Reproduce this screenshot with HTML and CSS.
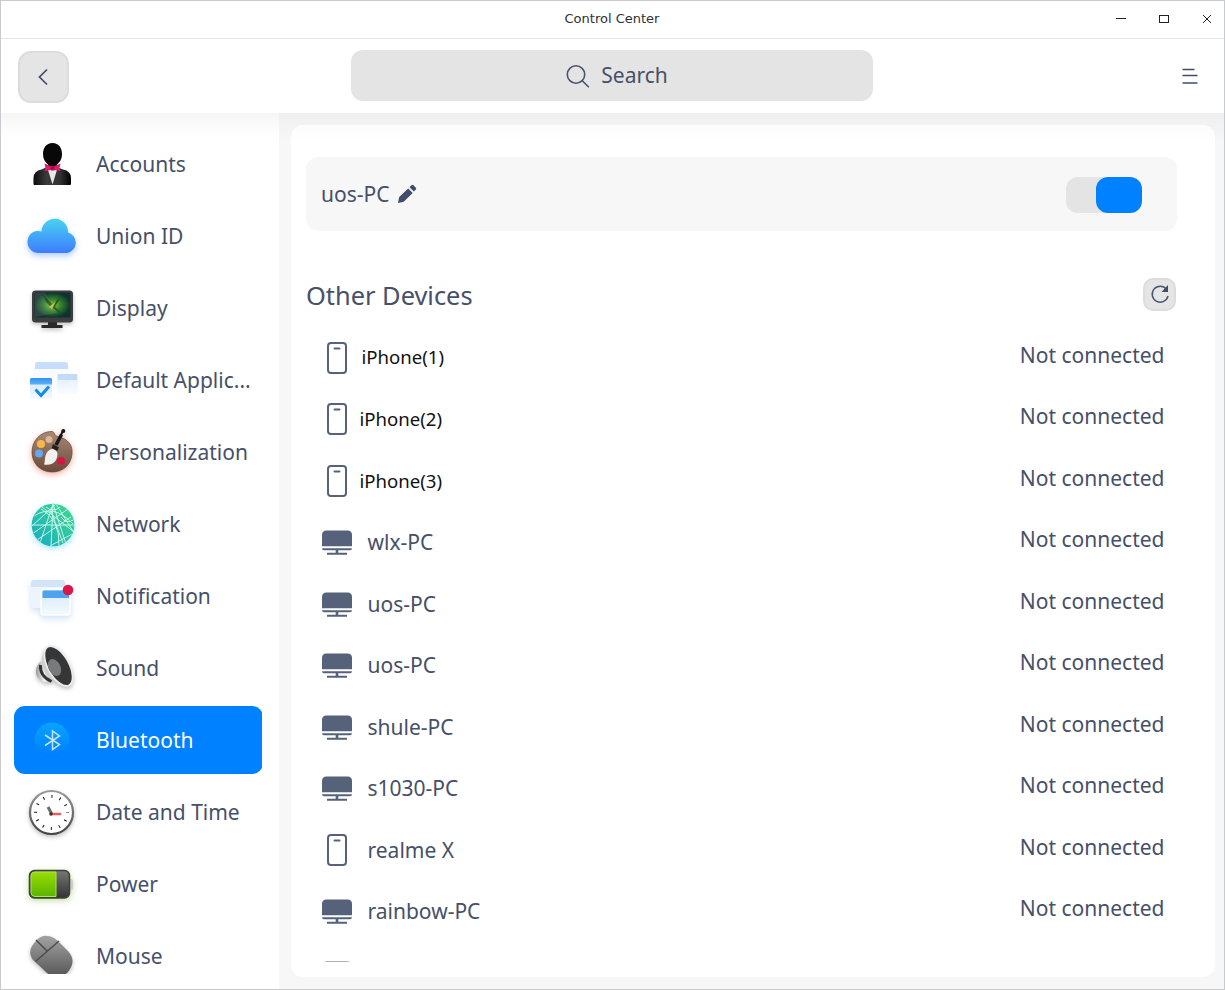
FILE: index.html
```html
<!DOCTYPE html>
<html lang="en">
<head>
<meta charset="utf-8">
<title>Control Center</title>
<link rel="stylesheet" href="styles.css">
</head>
<body>
<svg class="defs" width="0" height="0" aria-hidden="true">
  <defs>
    <linearGradient id="gCloud" x1="0" y1="0" x2="0" y2="1"><stop offset="0" stop-color="#48d2f0"/><stop offset="1" stop-color="#3e7cff"/></linearGradient>
    <linearGradient id="gSuit" x1="0" y1="0" x2="1" y2="0"><stop offset="0" stop-color="#0c0c0c"/><stop offset=".35" stop-color="#3a3a3a"/><stop offset=".7" stop-color="#333"/><stop offset="1" stop-color="#000"/></linearGradient>
    <radialGradient id="gScreen"><stop offset="0" stop-color="#8ccb1c"/><stop offset=".5" stop-color="#2f7d30"/><stop offset="1" stop-color="#10322e"/></radialGradient>
    <linearGradient id="gPane" x1="0" y1="0" x2="0" y2="1"><stop offset="0" stop-color="#d5e7f9"/><stop offset="1" stop-color="#f5faff"/></linearGradient>
    <linearGradient id="gBlue" x1="0" y1="0" x2="0" y2="1"><stop offset="0" stop-color="#2f93f0"/><stop offset="1" stop-color="#5db2f5"/></linearGradient>
    <linearGradient id="gWood" x1="0" y1="0" x2="0" y2="1"><stop offset="0" stop-color="#a98a74"/><stop offset="1" stop-color="#6b4a3c"/></linearGradient>
    <linearGradient id="gNet" x1="1" y1="0" x2="0" y2="1"><stop offset="0" stop-color="#42dc8b"/><stop offset="1" stop-color="#16aac2"/></linearGradient>
    <linearGradient id="gMetal" x1="0" y1="0" x2="1" y2="0"><stop offset="0" stop-color="#999"/><stop offset=".5" stop-color="#f1f1f1"/><stop offset="1" stop-color="#999"/></linearGradient>
    <linearGradient id="gBt" x1="0" y1="0" x2="0" y2="1"><stop offset="0" stop-color="#08a4ff"/><stop offset="1" stop-color="#007cfe"/></linearGradient>
    <linearGradient id="gRim" x1="0" y1="0" x2="0" y2="1"><stop offset="0" stop-color="#999"/><stop offset="1" stop-color="#444"/></linearGradient>
    <linearGradient id="gGreen" x1="0" y1="0" x2="0" y2="1"><stop offset="0" stop-color="#9bdc00"/><stop offset="1" stop-color="#5ab500"/></linearGradient>
    <linearGradient id="gDark" x1="0" y1="0" x2="0" y2="1"><stop offset="0" stop-color="#777"/><stop offset="1" stop-color="#333"/></linearGradient>
    <linearGradient id="gMouse" x1="0" y1="0" x2="0" y2="1"><stop offset="0" stop-color="#a3a3a3"/><stop offset="1" stop-color="#555"/></linearGradient>
    <clipPath id="cNet"><circle cx="27" cy="26" r="21"/></clipPath>
  </defs>
  <symbol id="phone" viewBox="0 0 32 36">
    <rect x="7" y="3" width="18" height="30" rx="3" fill="none" stroke="#556279" stroke-width="2"/>
    <path d="M13.500 8.400h5" stroke="#556279" stroke-width="2" stroke-linecap="round"/>
  </symbol>
  <symbol id="pc" viewBox="0 0 32 36">
    <path d="M1 22.300V11q0-4.500 4.500-4.500h21q4.500 0 4.500 4.500v11.300z" fill="#556279"/>
    <path d="M1 24.300h30q0 2-2 2H17.300v2.500H26v2H6v-2h8.700v-2.500H3q-2 0-2-2z" fill="#556279"/>
  </symbol>
</svg>
<div class="window">
  <header class="titlebar">
    <h1 class="title">Control Center</h1>
    <svg class="window-buttons" viewBox="0 0 100 16" width="100" height="16" fill="none" stroke="#222">
      <path d="M0 7.500h10"/><rect x="43.500" y="4.500" width="9" height="7"/><path d="M87 4l8 8m0-8l-8 8"/>
    </svg>
  </header>
  <div class="toolbar">
    <button class="back"><svg width="20" height="20" viewBox="0 0 20 20" fill="none" stroke="#414d68" stroke-width="1.700"><path d="M13 2.500L5.500 10l7.500 7.500"/></svg></button>
    <div class="search">
      <svg width="26" height="26" viewBox="0 0 26 26" fill="none" stroke="#46536b" stroke-width="1.600"><circle cx="11" cy="11.500" r="8.700"/><path d="M17.300 17.800l6.500 6.500"/></svg>
      <span>Search</span>
    </div>
    <svg class="menu" width="16" height="18" viewBox="0 0 16 18" fill="none" stroke="#414d68" stroke-width="1.400"><path d="M.5 2.500h12M.5 8.500h15M.5 16h15"/></svg>
  </div>
  <div class="body">
    <nav class="sidebar">
      <div class="nav-clip">
      <a class="nav-item"><svg class="nav-icon" viewBox="0 0 54 54"><path d="M8.500 46V40q0-7 8-8.500L22 29h10l6 2.500q8 1.500 8 8.500v6q0 1-1 1H9.500q-1 0-1-1z" fill="url(#gSuit)"/><path d="M23 32l4.500 14.500L32 32z" fill="#e8e8e8"/><path d="M27.500 5C21 5 18 10 18 16c0 5 2 8 5 10.500V29h9v-2.500c3-2.500 5-5.500 5-10.500 0-6-3-11-9.500-11z" fill="#080808"/><path d="M19.500 25.500l7 3h2l7-3-1 4.500 1 3-6.500-1h-3l-6.500 1 1-3z" fill="#e0196c"/><rect x="25.500" y="28" width="4" height="4.500" rx="1" fill="#a90e4b"/></svg><span>Accounts</span></a>
      <a class="nav-item"><svg class="nav-icon glow-blue" viewBox="0 0 54 54"><path d="M13.500 43A11 11 0 0 1 2.500 32A10.500 10.500 0 0 1 16.500 21.500A13 13 0 0 1 43 22.500A10.500 10.500 0 0 1 42 43z" fill="url(#gCloud)"/></svg><span>Union ID</span></a>
      <a class="nav-item"><svg class="nav-icon shade" viewBox="0 0 54 54"><path d="M23 38h9v5h5.500v3h-21v-3H23z" fill="#292929"/><rect x="7" y="8.500" width="41" height="32" rx="3.500" fill="#3b3d40"/><rect x="9.500" y="10.500" width="36" height="25" rx="1.500" fill="url(#gScreen)"/><path d="M10 11h10l12 20-22 4z" fill="#fff" opacity=".1"/><path d="M18 12l9 10 8-6-5 9 6 6-10-6-5-5z" fill="#182e1a" opacity=".6"/><path d="M24 25l7-6-4 8z" fill="#b5c56a"/></svg><span>Display</span></a>
      <a class="nav-item"><svg class="nav-icon" viewBox="0 0 54 54"><path d="M8 14h37v20H8z" fill="#f8fbff"/><path d="M10 14v-3q0-3 3-3h27q3 0 3 3v4H10z" fill="#c6defa"/><path d="M32 20h21v19q0 1-1 1H33q-1 0-1-1z" fill="url(#gPane)" opacity=".65"/><path d="M33 20h18q1 0 1 1v5H33z" fill="#c2dcf8"/><path d="M5 28h22v17H5z" fill="url(#gPane)"/><path d="M5 30.500v-5q0-1.500 1.500-1.500h19q1.500 0 1.500 1.500v5z" fill="url(#gBlue)"/><path d="M10.500 35.500l5.500 6 8-9" fill="none" stroke="#138be9" stroke-width="3"/></svg><span>Default Applic...</span></a>
      <a class="nav-item"><svg class="nav-icon glow-red" viewBox="0 0 54 54"><path d="M26 5.500c4-1 3 5 7 5C43 13 48 19 47 28 46 39 38 46 27 46 15 46 7 37 7 26 7 15 15 6 26 5.500z" fill="url(#gWood)" stroke="#664638" stroke-width=".7"/><circle cx="24" cy="13.500" r="3.500" fill="#d9b695"/><circle cx="16" cy="18" r="4" fill="#fbb743"/><circle cx="14" cy="27.500" r="4" fill="#64a8f2"/><circle cx="36" cy="35" r="4" fill="#d51643"/><path d="M26.500 23q5 0 6 4.500 0 7-5 10-4 2-8.500 1c2-3-1-12 7.500-15.500z" fill="#f3f1ed"/><path d="M28 18l6 3.500-1.800 3.500-5.500-3z" fill="#222"/><path d="M31 19l5.500-10.500" stroke="#171717" stroke-width="3.500"/><path d="M36 9l2-4.500" stroke="#171717" stroke-width="2"/><circle cx="38.300" cy="5" r="2" fill="#171717"/></svg><span>Personalization</span></a>
      <a class="nav-item"><svg class="nav-icon glow-cyan" viewBox="0 0 54 54"><circle cx="28" cy="27" r="21.300" fill="url(#gNet)"/><g clip-path="url(#cNet)" transform="translate(1 1)" fill="none" stroke="#dffff6" stroke-width="1" opacity=".85"><path d="M4 26h44M27 5L13 47M27 5l13 40M16 8l32 25M42 10L6 35M27 5l-2 43M30 5L6 27M11 41l34-23M30 5l18 29-24 13M25 12l12 32"/><path d="M8 17Q28 4 47 25M15 10Q34 20 33 47M35 18q6 8 12 3M20 8q7 6 14 0"/></g></svg><span>Network</span></a>
      <a class="nav-item"><svg class="nav-icon glow-soft" viewBox="0 0 54 54"><rect x="6" y="10" width="34" height="28" rx="3" fill="#edf4fd"/><path d="M6 17v-4q0-3 3-3h28q3 0 3 3v4z" fill="#d4e4f7"/><rect x="16" y="19" width="29" height="26" rx="3" fill="url(#gPane)" stroke="#fff" stroke-width="1.500"/><path d="M17.500 28v-6q0-1.500 1.500-1.500h25V28z" fill="#4ca4ed"/><circle cx="43" cy="20" r="5.300" fill="#da1748"/></svg><span>Notification</span></a>
      <a class="nav-item"><svg class="nav-icon shade" viewBox="0 0 54 54"><path d="M15 20c-6 5-7 19 8 21l5-4-8-18z" fill="url(#gMetal)"/><path d="M15.500 23q-1 11 11 16.500" fill="none" stroke="#333" stroke-width="3"/><path d="M21.500 5C16 12 15 23 20 31 27 40 38 45 46 45z" fill="#d0d0d0"/><ellipse cx="33.500" cy="24" rx="10.500" ry="22" transform="rotate(-29 33.500 24)" fill="#353637" stroke="#ededed" stroke-width="1.700"/><ellipse cx="29.500" cy="25.500" rx="6" ry="9" transform="rotate(-27 29.500 25.500)" fill="#77797b"/></svg><span>Sound</span></a>
      <a class="nav-item active"><svg class="nav-icon" viewBox="0 0 54 54"><circle cx="27" cy="26" r="17.500" fill="url(#gBt)"/><path d="M20 21l14.500 9.500-7 5V17l7 5L20 31.500" fill="none" stroke="#c5e7ff" stroke-width="1.500"/></svg><span>Bluetooth</span></a>
      <a class="nav-item"><svg class="nav-icon shade" viewBox="0 0 54 54"><circle cx="26.500" cy="26.500" r="21.500" fill="#fff" stroke="url(#gRim)" stroke-width="2.200"/><circle cx="26.500" cy="26.500" r="16" fill="none" stroke="#111" stroke-width="3" stroke-dasharray="1 7.378" stroke-dashoffset=".5"/><path d="M23 21l3.500 6.500" stroke="#66706c" stroke-width="3"/><path d="M26.500 28H36" stroke="#ed5b57" stroke-width="2.500"/><circle cx="26" cy="28" r="1.800" fill="#4b302f"/></svg><span>Date and Time</span></a>
      <a class="nav-item"><svg class="nav-icon glow-green" viewBox="0 0 54 54"><rect x="43" y="21" width="5" height="11" rx="2" fill="#ccc"/><rect x="4.500" y="12.500" width="40" height="27.500" rx="5" fill="url(#gDark)" stroke="#3a4432" stroke-width="1.500"/><path d="M31 14v24.500H10q-4 0-4-4V18q0-4 4-4z" fill="url(#gGreen)" stroke="#a9e653" stroke-width="1"/></svg><span>Power</span></a>
      <a class="nav-item"><svg class="nav-icon shade" viewBox="0 0 54 54"><path d="M11 11C18 2 28 6 34 12l9 9c8 9 4 16-1 22-7 6-15 5-21-1L8 30C3 23 5 17 11 11z" fill="url(#gMouse)"/><path d="M10.500 31.500L34 11M11 10l11.500 11.500" stroke="#4b4b4b" stroke-width="1.500" fill="none"/></svg><span>Mouse</span></a>
      </div>
    </nav>
    <main class="content">
      <section class="panel">
        <div class="adapter">
          <span>uos-PC</span>
          <svg width="20" height="20" viewBox="0 0 20 20" fill="#414d68"><path d="M1 19l1.200-6 9-8.600 4.500 4.500-9 8.900zM12.500 3.300l2-2q1-.9 2 0l2.300 2.400q.9.900 0 1.900l-1.900 1.900z"/></svg>
          <div class="toggle"><div class="knob"></div></div>
        </div>
        <div class="section-head">
          <h2>Other Devices</h2>
          <button class="refresh"><svg width="22" height="22" viewBox="0 0 22 22" fill="none" stroke="#4b5870" stroke-width="1.500"><path d="M17.500 6.200A8 8 0 1 0 19 13"/><path d="M19 2v7h-6.500z" fill="#414d68" stroke="none"/></svg></button>
        </div>
        <ul class="devices">
          <li><svg class="dev"><use href="#phone"/></svg><span class="alt first">iPhone(1)</span><em>Not connected</em></li>
          <li><svg class="dev"><use href="#phone"/></svg><span class="alt">iPhone(2)</span><em>Not connected</em></li>
          <li><svg class="dev"><use href="#phone"/></svg><span class="alt">iPhone(3)</span><em>Not connected</em></li>
          <li><svg class="dev"><use href="#pc"/></svg><span>wlx-PC</span><em>Not connected</em></li>
          <li><svg class="dev"><use href="#pc"/></svg><span>uos-PC</span><em>Not connected</em></li>
          <li><svg class="dev"><use href="#pc"/></svg><span>uos-PC</span><em>Not connected</em></li>
          <li><svg class="dev"><use href="#pc"/></svg><span>shule-PC</span><em>Not connected</em></li>
          <li><svg class="dev"><use href="#pc"/></svg><span>s1030-PC</span><em>Not connected</em></li>
          <li><svg class="dev"><use href="#phone"/></svg><span>realme X</span><em>Not connected</em></li>
          <li><svg class="dev"><use href="#pc"/></svg><span>rainbow-PC</span><em>Not connected</em></li>
          <li><svg class="dev"><use href="#pc"/></svg><span></span><em>Not connected</em></li>
        </ul>
      </section>
    </main>
  </div>
</div>
</body>
</html>
```
FILE: styles.css
```css
* { box-sizing: border-box; }
body { margin: 0; font-family: "Noto Sans", sans-serif; font-size: 21px; color: #465068; }
.defs { display: block; height: 0; }
.window { width: 1225px; height: 990px; border: 1px solid #c8cacd; display: flex; flex-direction: column; background: #fff; overflow: hidden; }
.titlebar { height: 38px; flex: none; border-bottom: 1px solid #e4e4e4; display: grid; grid-template-columns: 1fr auto 1fr; align-items: center; }
.title { grid-column: 2; margin: 0 1px 3px 0; font: 13px "DejaVu Sans", sans-serif; color: #303030; }
.window-buttons { justify-self: end; margin: 0 8px 2px 0; }
.toolbar { height: 74px; flex: none; display: flex; align-items: center; padding: 0 26px 0 17px; }
button { padding: 0; display: grid; place-items: center; background: #e5e5e5; border: 2px solid #dcdcdc; }
.back { width: 51px; height: 52px; border-radius: 13px; margin-top: 2px; }
.search { width: 522px; height: 51px; margin: 0 auto 1px 282px; padding-left: 9px; border-radius: 12px; background: #e4e4e4; display: flex; justify-content: center; align-items: center; gap: 10px; }
.search span { margin-bottom: 1px; }
.menu { margin-bottom: 1px; }
.body { flex: 1; display: flex; min-height: 0; }
.sidebar { width: 278px; flex: none; padding: 0 17px 15px 12px; background: linear-gradient(#f6f6f6, #fff 24px); }
.nav-clip { height: 100%; overflow: hidden; padding-top: 17px; display: flex; flex-direction: column; gap: 4px; }
.nav-item { height: 68px; flex: none; display: flex; align-items: center; gap: 17px; padding-left: 12px; width: 249px; margin-left: .5px; border-radius: 11px; white-space: nowrap; }
.nav-item.active { background: #0081ff; color: #fff; }
.nav-icon { width: 54px; height: 54px; flex: none; margin: 1px 0 0 -.5px; overflow: visible; }
.nav-item span { margin-bottom: 1px; }
.shade { filter: drop-shadow(0 2px 2px rgba(0, 0, 0, .25)); }
.glow-blue { filter: drop-shadow(0 3px 3px rgba(60, 128, 255, .4)); }
.glow-red { filter: drop-shadow(0 2px 3px rgba(220, 70, 40, .45)); }
.glow-cyan { filter: drop-shadow(0 2px 3px rgba(20, 190, 240, .4)); }
.glow-soft { filter: drop-shadow(0 3px 3px rgba(70, 140, 220, .25)); }
.glow-green { filter: drop-shadow(0 2px 3px rgba(110, 170, 30, .4)); }
.content { flex: 1; padding: 12px 9px 12px 12px; background: linear-gradient(#efefef, #f7f7f7 28px); }
.panel { height: 852px; border-radius: 12px; background: linear-gradient(#fcfcfc, #fff 16px); padding: 32px 38px 15px 15px; }
.adapter { height: 74px; border-radius: 12px; background: #f7f7f7; padding: 1px 35px 0 15px; display: flex; align-items: center; gap: 8px; }
.adapter span { margin-bottom: 2px; }
.adapter svg { margin-bottom: 2px; }
.toggle { margin-left: auto; width: 76px; height: 36px; border-radius: 12px; background: #e4e4e4; display: flex; justify-content: flex-end; }
.knob { width: 46px; height: 36px; border-radius: 12px; background: #0081ff; }
.section-head { display: flex; align-items: center; justify-content: space-between; height: 34px; margin: 46px 1px 0 0; }
h2 { margin: 2px 0 0; font-weight: 400; font-size: 25.4px; }
.refresh { width: 33px; height: 33px; border-radius: 10px; }
.devices { list-style: none; margin: 16px 0 0; padding: 0; height: 635px; overflow: hidden; }
.devices li { height: 61.5px; display: flex; align-items: center; padding: 0 12.5px 0 15px; }
.dev { width: 32px; height: 36px; flex: none; margin-right: 14.5px; }
.devices .alt { font-size: 18.6px; color: #111; margin: 0 0 1px -8px; }
.devices .alt.first { margin: 0 0 2px -6px; }
.devices em { font-style: normal; margin: 0 0 6.5px auto; }
```
